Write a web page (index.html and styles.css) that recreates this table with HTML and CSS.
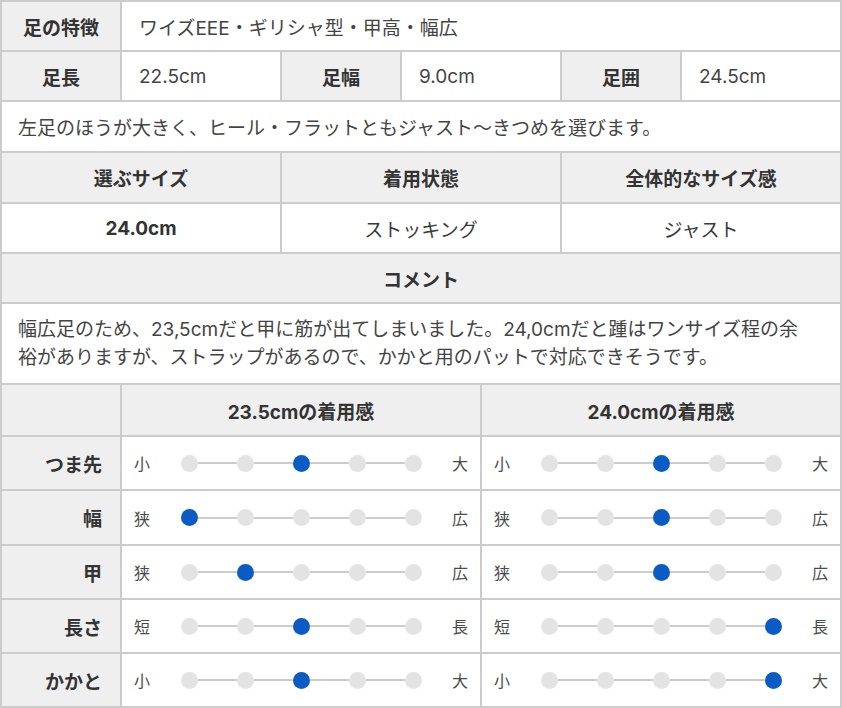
FILE: index.html
```html
<!DOCTYPE html>
<html lang="ja">
<head>
<meta charset="utf-8">
<title>サイズ感</title>
<link rel="stylesheet" href="styles.css">
</head>
<body>
<div class="sheet">
  <div class="row h48">
    <div class="cell head lab">足の特徴</div>
    <div class="cell val grow">ワイズEEE・ギリシャ型・甲高・幅広</div>
  </div>
  <div class="row h48">
    <div class="cell head lab">足長</div>
    <div class="cell val w160">22.5cm</div>
    <div class="cell head lab2">足幅</div>
    <div class="cell val w160">9.0cm</div>
    <div class="cell head lab2">足囲</div>
    <div class="cell val grow">24.5cm</div>
  </div>
  <div class="row h49">
    <div class="cell val grow pad16">左足のほうが大きく、ヒール・フラットともジャスト〜きつめを選びます。</div>
  </div>
  <div class="row h49">
    <div class="cell head third">選ぶサイズ</div>
    <div class="cell head third">着用状態</div>
    <div class="cell head third">全体的なサイズ感</div>
  </div>
  <div class="row h48">
    <div class="cell third bold">24.0cm</div>
    <div class="cell third">ストッキング</div>
    <div class="cell third">ジャスト</div>
  </div>
  <div class="row h48">
    <div class="cell head grow">コメント</div>
  </div>
  <div class="row h79">
    <div class="cell val grow comment">幅広足のため、23,5cmだと甲に筋が出てしまいました。24,0cmだと踵はワンサイズ程の余裕がありますが、ストラップがあるので、かかと用のパットで対応できそうです。</div>
  </div>
  <div class="row h50">
    <div class="cell head lab"></div>
    <div class="cell head half">23.5cmの着用感</div>
    <div class="cell head half">24.0cmの着用感</div>
  </div>

  <div class="row h52">
    <div class="cell head lab right">つま先</div>
    <div class="cell half slider">
      <span class="end">小</span>
      <div class="track"><i class="dot"></i><b class="seg"></b><i class="dot"></i><b class="seg"></b><i class="dot on"></i><b class="seg"></b><i class="dot"></i><b class="seg"></b><i class="dot"></i></div>
      <span class="end">大</span>
    </div>
    <div class="cell half slider">
      <span class="end">小</span>
      <div class="track"><i class="dot"></i><b class="seg"></b><i class="dot"></i><b class="seg"></b><i class="dot on"></i><b class="seg"></b><i class="dot"></i><b class="seg"></b><i class="dot"></i></div>
      <span class="end">大</span>
    </div>
  </div>
  <div class="row h53">
    <div class="cell head lab right">幅</div>
    <div class="cell half slider">
      <span class="end">狭</span>
      <div class="track"><i class="dot on"></i><b class="seg"></b><i class="dot"></i><b class="seg"></b><i class="dot"></i><b class="seg"></b><i class="dot"></i><b class="seg"></b><i class="dot"></i></div>
      <span class="end">広</span>
    </div>
    <div class="cell half slider">
      <span class="end">狭</span>
      <div class="track"><i class="dot"></i><b class="seg"></b><i class="dot"></i><b class="seg"></b><i class="dot on"></i><b class="seg"></b><i class="dot"></i><b class="seg"></b><i class="dot"></i></div>
      <span class="end">広</span>
    </div>
  </div>
  <div class="row h52">
    <div class="cell head lab right">甲</div>
    <div class="cell half slider">
      <span class="end">狭</span>
      <div class="track"><i class="dot"></i><b class="seg"></b><i class="dot on"></i><b class="seg"></b><i class="dot"></i><b class="seg"></b><i class="dot"></i><b class="seg"></b><i class="dot"></i></div>
      <span class="end">広</span>
    </div>
    <div class="cell half slider">
      <span class="end">狭</span>
      <div class="track"><i class="dot"></i><b class="seg"></b><i class="dot"></i><b class="seg"></b><i class="dot on"></i><b class="seg"></b><i class="dot"></i><b class="seg"></b><i class="dot"></i></div>
      <span class="end">広</span>
    </div>
  </div>
  <div class="row h52">
    <div class="cell head lab right">長さ</div>
    <div class="cell half slider">
      <span class="end">短</span>
      <div class="track"><i class="dot"></i><b class="seg"></b><i class="dot"></i><b class="seg"></b><i class="dot on"></i><b class="seg"></b><i class="dot"></i><b class="seg"></b><i class="dot"></i></div>
      <span class="end">長</span>
    </div>
    <div class="cell half slider">
      <span class="end">短</span>
      <div class="track"><i class="dot"></i><b class="seg"></b><i class="dot"></i><b class="seg"></b><i class="dot"></i><b class="seg"></b><i class="dot"></i><b class="seg"></b><i class="dot on"></i></div>
      <span class="end">長</span>
    </div>
  </div>
  <div class="row h52">
    <div class="cell head lab right">かかと</div>
    <div class="cell half slider">
      <span class="end">小</span>
      <div class="track"><i class="dot"></i><b class="seg"></b><i class="dot"></i><b class="seg"></b><i class="dot on"></i><b class="seg"></b><i class="dot"></i><b class="seg"></b><i class="dot"></i></div>
      <span class="end">大</span>
    </div>
    <div class="cell half slider">
      <span class="end">小</span>
      <div class="track"><i class="dot"></i><b class="seg"></b><i class="dot"></i><b class="seg"></b><i class="dot"></i><b class="seg"></b><i class="dot"></i><b class="seg"></b><i class="dot on"></i></div>
      <span class="end">大</span>
    </div>
  </div>
</div>
</body>
</html>
```
FILE: styles.css
```css
* { box-sizing: border-box; }
html, body { margin: 0; padding: 0; background: #fff; }
body {
  font-family: Inter, "Noto Sans CJK JP", sans-serif;
  font-size: 19px;
  color: #3a3a3a;
}
.sheet {
  width: 842px;
  border: 2px solid #cccccc;
  display: flex;
  flex-direction: column;
}
.row {
  display: flex;
  align-items: stretch;
}
.row + .row { border-top: 2px solid #cccccc; }
.h48 { height: 50px; }
.h49 { height: 51px; }
.h50 { height: 52px; }
.h52 { height: 54px; }
.h53 { height: 55px; }
.h79 { height: 81px; }
.row:first-child.h48 { height: 48px; }

.cell {
  display: flex;
  align-items: center;
  justify-content: center;
  white-space: nowrap;
}
.cell + .cell { border-left: 2px solid #cccccc; }
.head {
  background: #efefef;
  font-weight: 700;
  color: #333;
}
.bold { font-weight: 700; color: #333; }
.lab { width: 118px; flex: none; }
.lab2 { width: 120px; flex: none; }
.w160 { width: 160px; flex: none; }
.grow { flex: 1; }
.third { flex: 1; }
.half { flex: 1; }
.val {
  justify-content: flex-start;
  padding: 0 17px;
  color: #444;
}
.pad16 { padding: 0 16px; }
.comment {
  white-space: normal;
  line-height: 28px;
  padding: 0 26px 0 16px;
}
.right {
  justify-content: flex-end;
  padding-right: 18px;
}
.slider {
  justify-content: space-between;
  padding: 0 12px;
  font-size: 16px;
  color: #4a4a4a;
}
.end { width: 16px; text-align: center; }
.track {
  width: 241px;
  display: flex;
  align-items: center;
}
.dot {
  width: 17px;
  height: 17px;
  border-radius: 50%;
  background: #e3e3e3;
  flex: none;
}
.dot.on { background: #0b5bc4; }
.seg {
  flex: 1;
  height: 2px;
  background: #cccccc;
}
```
